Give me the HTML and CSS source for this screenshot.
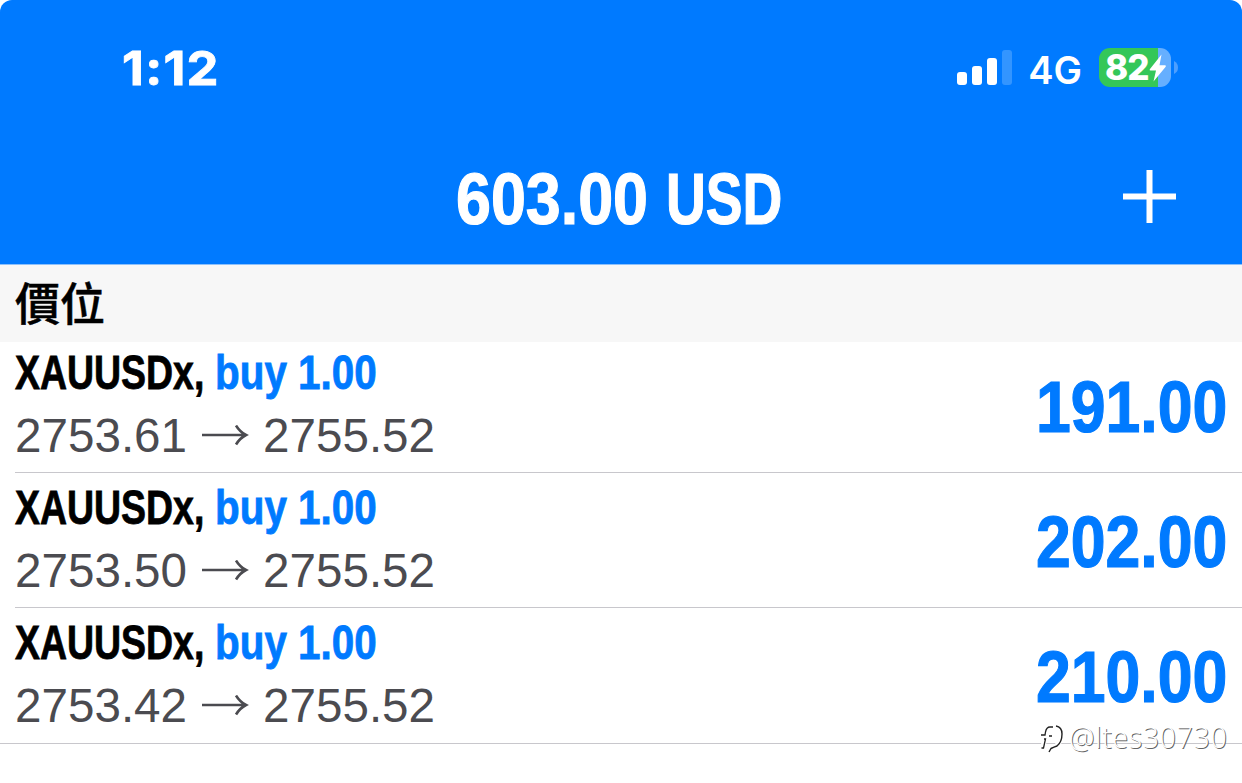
FILE: index.html
```html
<!DOCTYPE html>
<html lang="zh-Hant">
<head>
  <meta charset="UTF-8">
  <title>Trade</title>
  <link rel="stylesheet" href="styles.css">
</head>
<body>
  <header class="header">
    <!-- Status bar -->
    <div class="status-bar">
      <span class="time">1:12</span>
      <div class="status-icons">
        <svg class="signal" width="56" height="36" viewBox="0 0 56 36">
          <rect x="0" y="22" width="10" height="13" rx="3" fill="#fff"/>
          <rect x="15" y="16" width="10" height="19" rx="3" fill="#fff"/>
          <rect x="30" y="8" width="10" height="27" rx="3" fill="#fff"/>
          <rect x="45" y="0" width="10" height="35" rx="3" fill="#3395ff"/>
        </svg>
        <span class="network">4G</span>
        <div class="battery">
          <span class="battery-level">82</span>
          <svg class="bolt" width="18" height="28" viewBox="0 0 18 28">
            <path d="M12.5 0.5L0.8 15.2Q0.2 16.5 1.5 16.5H7L4.5 27.5L16.7 12.8Q17.5 11.3 16 11.3H10.5Z" fill="#fff"/>
          </svg>
        </div>
        <svg class="battery-cap" width="4" height="13" viewBox="0 0 4 13">
          <path d="M0 0Q4 2 4 6.5T0 13Z" fill="#4d9fff"/>
        </svg>
      </div>
    </div>

    <!-- Balance -->
    <div class="title-bar">
      <h1 class="balance"><span class="balance-amount">603.00</span><span class="balance-currency">USD</span></h1>
      <svg class="add" width="54" height="54" viewBox="0 0 54 54">
        <path d="M26.5 0V53M0 26.5H53" stroke="#fff" stroke-width="6"/>
      </svg>
    </div>
  </header>

  <h2 class="section-title">價位</h2>

  <!-- Positions -->
  <ul class="positions">
    <li class="position">
      <div class="details">
        <div class="name"><span class="symbol">XAUUSDx,</span><span class="side">buy 1.00</span></div>
        <div class="prices"><span class="open">2753.61</span><svg class="arrow" width="47" height="22" viewBox="0 0 47 22"><path d="M0 10H44M34 0.500Q38 7 44 10Q38 13 34 19.500" fill="none" stroke="#4b4b50" stroke-width="2.6"/></svg><span>2755.52</span></div>
      </div>
      <span class="profit">191.00</span>
    </li>
    <li class="position">
      <div class="details">
        <div class="name"><span class="symbol">XAUUSDx,</span><span class="side">buy 1.00</span></div>
        <div class="prices"><span class="open">2753.50</span><svg class="arrow" width="47" height="22" viewBox="0 0 47 22"><path d="M0 10H44M34 0.500Q38 7 44 10Q38 13 34 19.500" fill="none" stroke="#4b4b50" stroke-width="2.6"/></svg><span>2755.52</span></div>
      </div>
      <span class="profit">202.00</span>
    </li>
    <li class="position">
      <div class="details">
        <div class="name"><span class="symbol">XAUUSDx,</span><span class="side">buy 1.00</span></div>
        <div class="prices"><span class="open">2753.42</span><svg class="arrow" width="47" height="22" viewBox="0 0 47 22"><path d="M0 10H44M34 0.500Q38 7 44 10Q38 13 34 19.500" fill="none" stroke="#4b4b50" stroke-width="2.6"/></svg><span>2755.52</span></div>
      </div>
      <span class="profit">210.00</span>
    </li>
  </ul>

  <div class="watermark">
    <svg width="28" height="34" viewBox="0 0 28 34">
      <g fill="none">
        <path d="M15 7Q9 6 8.500 12L6 28M4 16H15M18 6Q26 8 24 18Q22 26 12 31" stroke="#fff" stroke-width="5"/>
        <path d="M16 7H13Q9.500 7 8.500 12L8 15H4M7 19H8.500L6.500 28H4.500M12 16H15" stroke="#222" stroke-width="1.300"/>
        <path d="M19 6Q25 7 25 14Q25 22 20 26Q17 27 14 28.500L12 32" stroke="#222" stroke-width="1.400"/>
      </g>
    </svg>
    <span>@ltes30730</span>
  </div>
</body>
</html>
```
FILE: styles.css
```css
* {
  box-sizing: border-box;
}

body {
  margin: 0;
  width: 1242px;
  height: 783px;
  overflow: hidden;
  background: #fff;
  font-family: "Liberation Sans", Arial, sans-serif;
}

.header {
  height: 265px;
  background: #007aff;
  border-bottom: 1px solid #8dc1fb;
  border-radius: 12px 12px 0 0;
  color: #fff;
}

.status-bar {
  display: flex;
  justify-content: space-between;
  align-items: center;
  height: 135px;
  padding: 0 64px 0 122px;
  font-family: Inter, sans-serif;
}

.time {
  font-size: 47px;
  font-weight: 700;
  letter-spacing: 1.2px;
  -webkit-text-stroke: 0.8px #fff;
  transform: scaleX(1.08);
  transform-origin: left;
}

.status-icons {
  display: flex;
  align-items: center;
}

.network {
  margin: 4px 17px 0 15px;
  font-size: 38px;
  font-weight: 600;
}

.battery {
  display: flex;
  align-items: center;
  width: 72px;
  height: 39px;
  padding-left: 6px;
  border-radius: 11px;
  background: linear-gradient(to right, #34c759 59px, #66afff 59px);
}

.battery-level {
  font-size: 35px;
  font-weight: 800;
  line-height: 39px;
  letter-spacing: -1px;
}

.battery-cap {
  margin-left: 3px;
}

.title-bar {
  display: flex;
  align-items: flex-start;
  height: 129px;
  padding: 24px 65px 0 456px;
}

.balance {
  display: flex;
  margin: 0;
  font-size: 73px;
  font-weight: bold;
  line-height: 80px;
  -webkit-text-stroke: 1.2px #fff;
}

.balance-amount {
  width: 210px;
  transform: scaleX(0.86);
  transform-origin: left;
}

.balance-currency {
  transform: scaleX(0.755);
  transform-origin: left;
}

.add {
  margin: 11px 0 0 auto;
}

.section-title {
  height: 77px;
  margin: 0;
  padding-left: 15px;
  background: #f7f7f7;
  color: #000;
  font-family: "Noto Sans CJK TC", sans-serif;
  font-size: 45px;
  font-weight: 500;
  line-height: 73px;
  -webkit-text-stroke: 0.5px #000;
}

.positions {
  margin: 0;
  padding: 0;
  list-style: none;
}

.position {
  display: flex;
  justify-content: space-between;
  align-items: flex-end;
  height: 135px;
  margin-left: 15px;
  padding: 0 15px 6px 0;
  border-bottom: 1px solid #c8c7cc;
}

.position:first-child {
  height: 131px;
}

.position:last-child {
  height: 136px;
  margin-left: 0;
  padding-left: 15px;
  padding-bottom: 7px;
}

.name {
  display: flex;
  height: 63px;
  font-size: 48px;
  font-weight: bold;
  line-height: 60px;
}

.symbol {
  width: 200px;
  color: #000;
  -webkit-text-stroke: 0.8px #000;
  transform: scaleX(0.78);
  transform-origin: left;
}

.side {
  color: #007aff;
  -webkit-text-stroke: 0.8px #007aff;
  transform: scaleX(0.842);
  transform-origin: left;
}

.prices {
  display: flex;
  align-items: center;
  height: 60px;
  color: #4b4b50;
  font-size: 47.6px;
  line-height: 60px;
}

.open {
  width: 187px;
}

.arrow {
  margin-right: 14px;
}

.profit {
  padding-bottom: 22px;
  color: #007aff;
  font-size: 73px;
  font-weight: bold;
  line-height: 74px;
  -webkit-text-stroke: 1.2px #007aff;
  transform: scaleX(0.857);
  transform-origin: right;
}

.watermark {
  position: absolute;
  right: 14px;
  top: 719px;
  display: flex;
  align-items: center;
  height: 36px;
  color: #fff;
  font-family: "Open Sans", sans-serif;
  font-size: 28.5px;
  font-weight: 300;
  letter-spacing: 0.7px;
  text-shadow: 1px 1px 0 #666;
}

.watermark span {
  width: 159px;
  margin-left: 4px;
  line-height: 34px;
  white-space: nowrap;
}
```
